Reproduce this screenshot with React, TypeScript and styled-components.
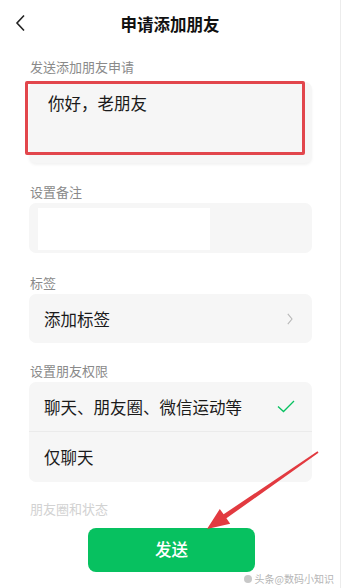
import React from "react";
import styled, { createGlobalStyle } from "styled-components";

const Global = createGlobalStyle`
  html, body { margin: 0; padding: 0; background: #fff; }
  body { font-family: "Noto Sans CJK SC", "Noto Sans", sans-serif; }
`;

const Page = styled.div`
  position: relative;
  width: 340px;
  min-height: 588px;
  border-right: 1px solid #ececec;
  background: #fff;
  overflow: hidden;
`;

const Header = styled.header`
  height: 46px;
  display: grid;
  grid-template-columns: 48px 1fr 48px;
  align-items: center;
`;

const Back = styled.div`
  display: flex;
  align-items: center;
  padding-left: 14px;
  height: 46px;
`;

const Title = styled.h1`
  margin: 0;
  text-align: center;
  font-size: 16.5px;
  font-weight: 700;
  color: #111;
  line-height: 22px;
  padding-top: 1px;
`;

const Body = styled.main`
  padding: 0 28px 0 29px;
  display: flex;
  flex-direction: column;
`;

const Section = styled.section<{ $top: number }>`
  margin-top: ${(p) => p.$top}px;
  display: flex;
  flex-direction: column;
`;

const Label = styled.div<{ $gap?: number; $faded?: boolean }>`
  font-size: 13px;
  line-height: 18px;
  color: ${(p) => (p.$faded ? "#d2d2d2" : "#8a8a8a")};
  margin-bottom: ${(p) => p.$gap ?? 2}px;
  padding-left: 1px;
`;

const Card = styled.div`
  position: relative;
  background: #f6f6f6;
  border-radius: 7px;
`;

const MessageCard = styled(Card)`
  height: 81px;
  padding: 10px 0 0 19px;
  box-sizing: border-box;
  box-shadow: 0 2px 3px rgba(0, 0, 0, 0.05);
`;

const MessageText = styled.div`
  font-size: 16.5px;
  line-height: 22px;
  color: #1a1a1a;
`;

const Highlight = styled.div`
  position: absolute;
  left: -4px;
  top: -1px;
  width: 280px;
  height: 74px;
  box-sizing: border-box;
  border: 3px solid #e2464c;
  border-radius: 2px;
  pointer-events: none;
`;

const NoteCard = styled(Card)`
  height: 50px;
  padding: 5px 0 0 9px;
  box-sizing: border-box;
`;

const Blank = styled.div`
  width: 172px;
  height: 42px;
  background: #fff;
`;

const Row = styled.div<{ $h: number }>`
  height: ${(p) => p.$h}px;
  display: flex;
  align-items: center;
  justify-content: space-between;
  padding: 0 17px 0 15px;
  font-size: 16.5px;
  color: #1a1a1a;
`;

const Divider = styled.div`
  height: 1px;
  background: #ebebeb;
`;

const SendWrap = styled.div`
  display: flex;
  justify-content: center;
  margin-top: 8px;
  padding-left: 2px;
`;

const SendButton = styled.button`
  width: 167px;
  height: 44px;
  border: none;
  border-radius: 8px;
  background: #07c160;
  color: #fff;
  font-family: inherit;
  font-size: 16.5px;
  font-weight: 500;
  padding: 0 0 2px;
`;

const Watermark = styled.div`
  position: absolute;
  right: 6px;
  bottom: 3px;
  font-size: 10px;
  line-height: 12px;
  color: #b5b5b5;
  display: flex;
  align-items: center;
  gap: 3px;
`;

const Dot = styled.span`
  width: 8px;
  height: 8px;
  border-radius: 50%;
  background: #c8c8c8;
`;

const Overlay = styled.svg`
  position: absolute;
  left: 0;
  top: 0;
  pointer-events: none;
`;

export default function App() {
  return (
    <>
      <Global />
      <Page>
        <Header>
          <Back>
            <svg width="12" height="18" viewBox="0 0 12 18">
              <path d="M10 1.5 L3 9 L10 16.5" fill="none" stroke="#222" strokeWidth="1.6" />
            </svg>
          </Back>
          <Title>申请添加朋友</Title>
          <div />
        </Header>
        <Body>
          <Section $top={12}>
            <Label $gap={6}>发送添加朋友申请</Label>
            <MessageCard>
              <MessageText>你好，老朋友</MessageText>
              <Highlight />
            </MessageCard>
          </Section>
          <Section $top={20}>
            <Label>设置备注</Label>
            <NoteCard>
              <Blank />
            </NoteCard>
          </Section>
          <Section $top={21}>
            <Label>标签</Label>
            <Card>
              <Row $h={49}>
                <span>添加标签</span>
                <svg width="6" height="12" viewBox="0 0 6 12" style={{ marginRight: 2 }}>
                  <path d="M0.8 0.8 L5 6 L0.8 11.2" fill="none" stroke="#b8b8b8" strokeWidth="1.1" />
                </svg>
              </Row>
            </Card>
          </Section>
          <Section $top={19}>
            <Label>设置朋友权限</Label>
            <Card>
              <Row $h={49}>
                <span>聊天、朋友圈、微信运动等</span>
                <svg width="18" height="13" viewBox="0 0 18 13">
                  <path d="M1 6.5 L6.5 11.5 L17 1" fill="none" stroke="#07c160" strokeWidth="1.3" />
                </svg>
              </Row>
              <Divider />
              <Row $h={50}>
                <span>仅聊天</span>
              </Row>
            </Card>
          </Section>
          <Section $top={18}>
            <Label $faded>朋友圈和状态</Label>
          </Section>
          <SendWrap>
            <SendButton>发送</SendButton>
          </SendWrap>
        </Body>
        <Watermark>
          <Dot />
          <span>头条@数码小知识</span>
        </Watermark>
        <Overlay width="344" height="588" viewBox="0 0 344 588">
          <polygon
            points="207,529 230.2,523.7 226.4,518.3 318.5,452.7 317.5,451.3 223.6,514.3 219.8,508.9"
            fill="#e23a40"
          />
        </Overlay>
      </Page>
    </>
  );
}
